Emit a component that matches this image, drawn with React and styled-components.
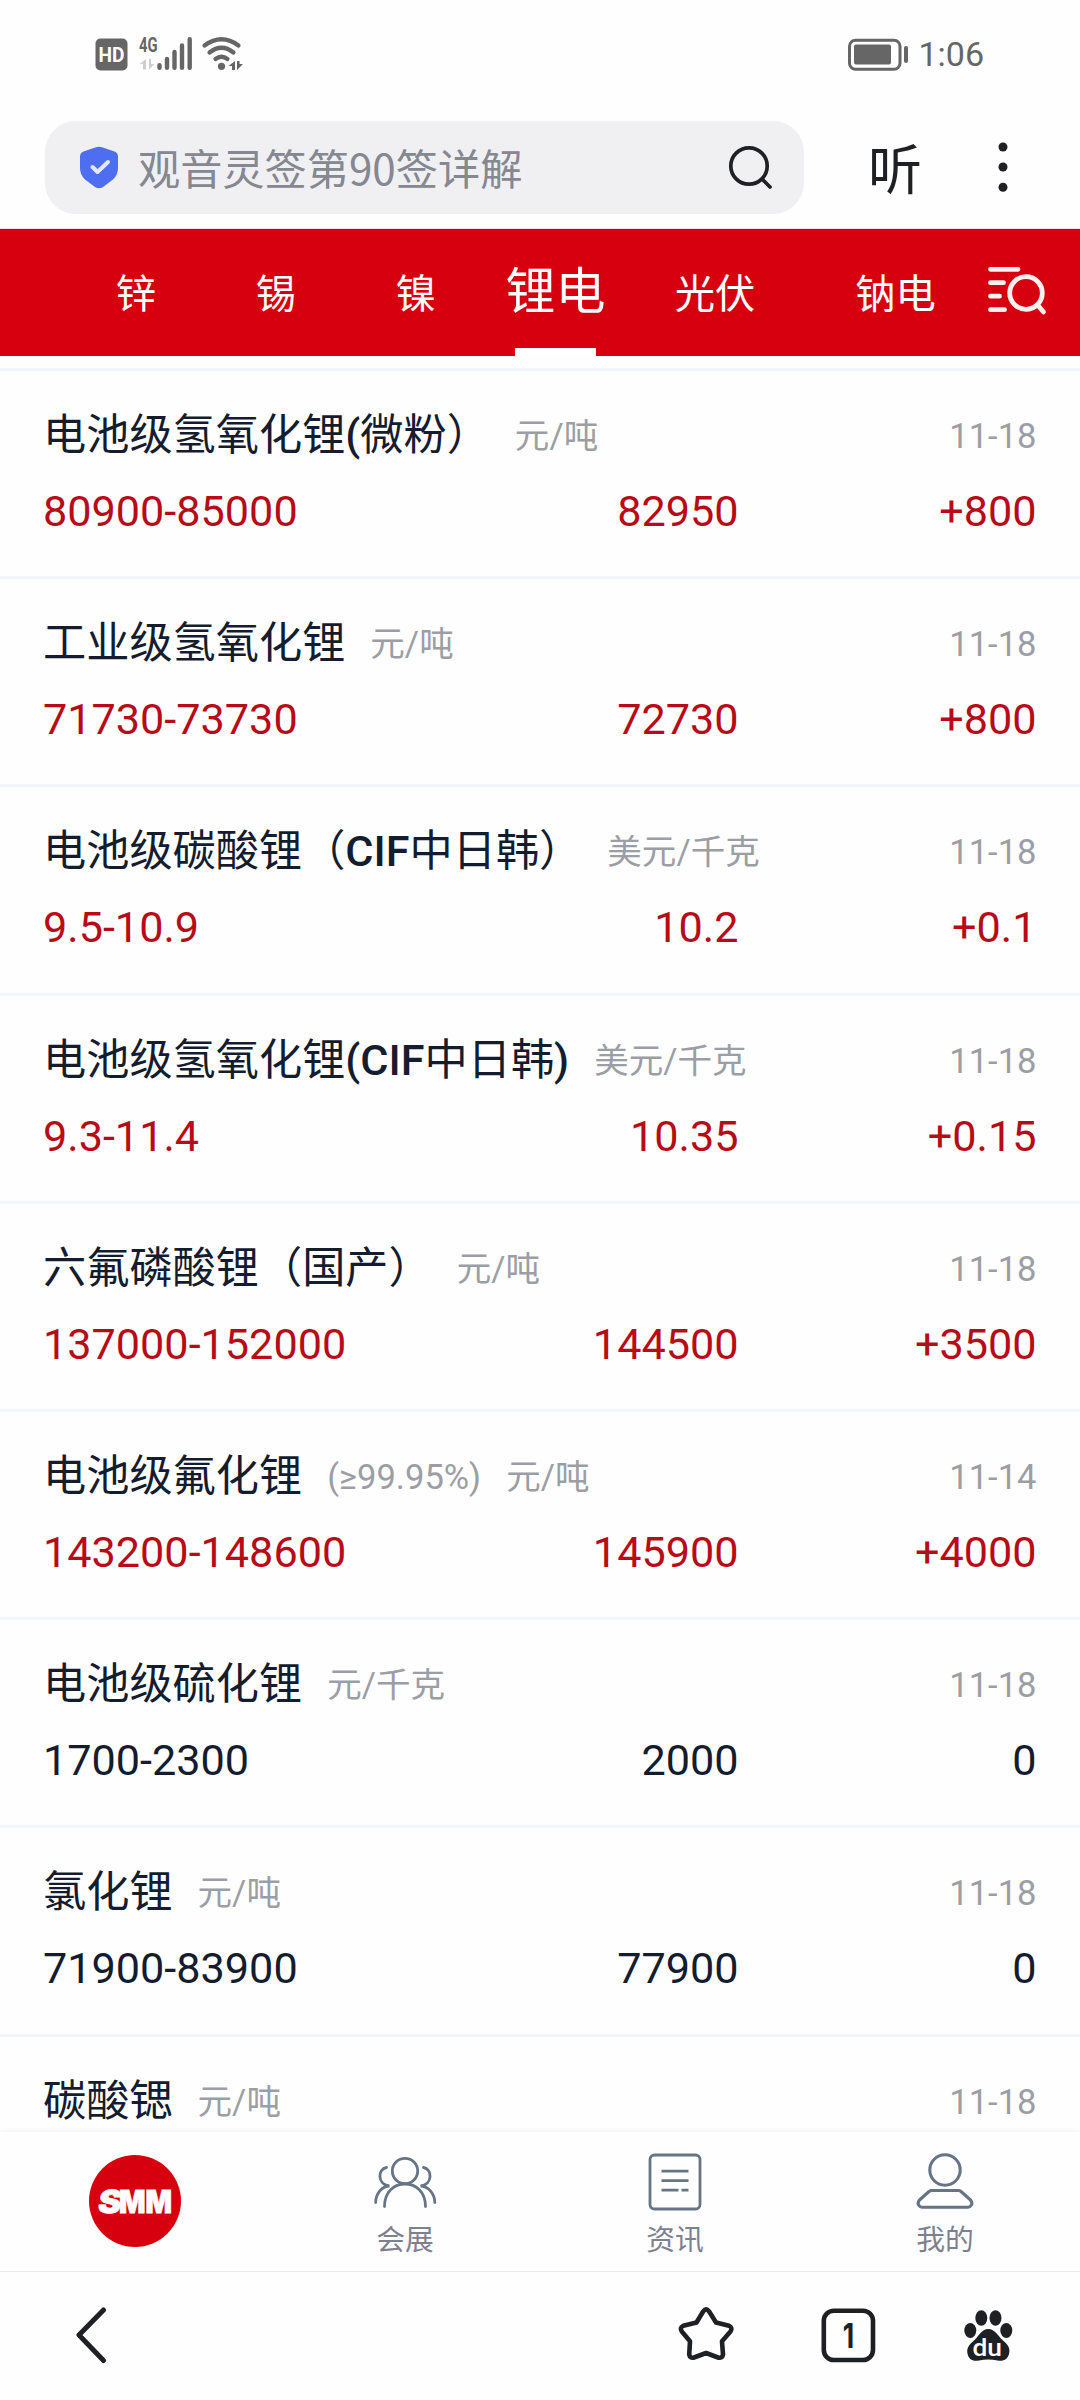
import React from 'react';
import styled, { createGlobalStyle } from 'styled-components';

const GlobalStyle = createGlobalStyle`
  * {
    box-sizing: border-box;
  }

  body {
    margin: 0;
    background-color: #fefefe;
    font-family: Roboto, 'Noto Sans CJK SC', sans-serif;
  }
`;

const Screen = styled.div`
  display: flex;
  flex-direction: column;
  width: 1080px;
  height: 2400px;
  overflow: hidden;
  background-color: #fefefe;
`;

const StatusBar = styled.div`
  display: flex;
  flex: none;
  align-items: flex-end;
  justify-content: space-between;
  height: 72px;
  padding: 0 96px 0 95px;
`;

const StatusGroup = styled.div`
  display: flex;
  align-items: center;
  gap: 9px;
`;

const Clock = styled.span`
  font-size: 34px;
  line-height: 36px;
  color: #666;
`;

const BrowserBar = styled.div`
  display: flex;
  flex: none;
  align-items: center;
  height: 157px;
  padding: 34px 72px 0 45px;
  border-bottom: 1px solid #f5dfe2;
`;

const SearchBox = styled.div`
  display: flex;
  align-items: center;
  width: 759px;
  height: 93px;
  padding: 0 31px 0 33px;
  border-radius: 31px;
  background-color: #f0f0f3;
`;

const SearchText = styled.span`
  flex: 1;
  margin-left: 18px;
  font-family: 'Noto Sans CJK SC', sans-serif;
  font-size: 42.2px;
  line-height: 60px;
  color: #858791;
`;

const ListenButton = styled.span`
  margin: 0 auto 0 64px;
  font-family: 'Noto Sans CJK SC', sans-serif;
  font-size: 54px;
  font-weight: 400;
  line-height: 60px;
  color: #1f2024;
`;

const Tabs = styled.nav`
  display: flex;
  flex: none;
  height: 127px;
  padding-left: 66px;
  border-top: 1px solid #a0101d;
  background-color: #d7000f;
`;

const Tab = styled.div`
  position: relative;
  flex: none;
  width: ${(props) => props.$width}px;
  padding-top: ${(props) => (props.$active ? 27 : 35)}px;
  font-size: ${(props) => (props.$active ? 50 : 40.3)}px;
  line-height: ${(props) => (props.$active ? 70 : 60)}px;
  text-align: center;
  color: #fff;
`;

const Indicator = styled.div`
  position: absolute;
  bottom: 0;
  left: 50%;
  width: 81px;
  height: 8px;
  margin-left: -41px;
  background-color: #fff;
`;

const TabSearch = styled.div`
  padding-top: 34px;
`;

const List = styled.main`
  flex: 1;
  min-height: 0;
  padding-top: 12px;
  overflow: hidden;
`;

const Row = styled.section`
  height: 208.2px;
  padding: 34px 43.5px 0 43px;
  border-top: 3px solid #f2f5f9;
`;

const RowHead = styled.div`
  display: flex;
  align-items: center;
  height: 62px;
`;

const Name = styled.h2`
  margin: 0;
  font-size: 43.2px;
  font-weight: 400;
  line-height: 62px;
  white-space: nowrap;
  color: #141c2f;
`;

const Latin = styled.span`
  font-weight: 500;
`;

const Unit = styled.span`
  margin-left: 25px;
  font-size: 34.56px;
  line-height: 50px;
  white-space: nowrap;
  color: #9c9ea5;
`;

const RowDate = styled.span`
  margin-left: auto;
  font-size: 34.56px;
  line-height: 50px;
  color: #9c9ea5;
`;

const Prices = styled.div`
  display: grid;
  grid-template-columns: 400px 295.5px 1fr;
  margin-top: 15px;
  font-size: 43.2px;
  line-height: 60px;
  color: ${(props) => (props.$up ? '#b70c18' : '#141c2f')};
`;

const Price = styled.span`
  text-align: ${(props) => props.$align || 'right'};
`;

const BottomNav = styled.nav`
  display: grid;
  flex: none;
  grid-template-columns: repeat(4, 1fr);
  height: 139px;
  background-color: #fefefe;
  box-shadow: 0 -2px 5px rgba(0, 0, 0, 0.035);
`;

const NavItem = styled.div`
  display: flex;
  flex-direction: column;
  align-items: center;
  padding-top: ${(props) => props.$top || 20}px;
`;

const NavLabel = styled.span`
  margin-top: 8px;
  font-size: 28.8px;
  line-height: 40px;
  color: #7e818d;
`;

const Toolbar = styled.footer`
  display: flex;
  flex: none;
  align-items: center;
  height: 129px;
  padding: 0 65px 2px 72px;
  border-top: 1px solid #e9e9eb;
`;

const ToolbarActions = styled.div`
  display: flex;
  align-items: center;
  gap: 84px;
  margin-left: auto;
`;

const tabs = [
  { label: '锌', width: 140 },
  { label: '锡', width: 140 },
  { label: '镍', width: 140 },
  { label: '锂电', width: 139, active: true },
  { label: '光伏', width: 180 },
  { label: '钠电', width: 181 },
];

const prices = [
  { name: '电池级氢氧化锂(微粉）', units: ['元/吨'], date: '11-18', range: '80900-85000', avg: '82950', change: '+800' },
  { name: '工业级氢氧化锂', units: ['元/吨'], date: '11-18', range: '71730-73730', avg: '72730', change: '+800' },
  { name: '电池级碳酸锂（CIF中日韩）', units: ['美元/千克'], date: '11-18', range: '9.5-10.9', avg: '10.2', change: '+0.1' },
  { name: '电池级氢氧化锂(CIF中日韩)', units: ['美元/千克'], date: '11-18', range: '9.3-11.4', avg: '10.35', change: '+0.15' },
  { name: '六氟磷酸锂（国产）', units: ['元/吨'], date: '11-18', range: '137000-152000', avg: '144500', change: '+3500' },
  { name: '电池级氟化锂', units: ['(≥99.95%)', '元/吨'], date: '11-14', range: '143200-148600', avg: '145900', change: '+4000' },
  { name: '电池级硫化锂', units: ['元/千克'], date: '11-18', range: '1700-2300', avg: '2000', change: '0' },
  { name: '氯化锂', units: ['元/吨'], date: '11-18', range: '71900-83900', avg: '77900', change: '0' },
  { name: '碳酸锶', units: ['元/吨'], date: '11-18', range: '', avg: '', change: '0' },
];

const SignalIcons = () => (
  <svg width="150" height="46" viewBox="95 26 150 46">
    <rect x="95.5" y="38.5" width="32" height="32" rx="5" fill="#666" />
    <text x="111.5" y="62" textAnchor="middle" textLength="26" lengthAdjust="spacingAndGlyphs" fontFamily="Roboto" fontWeight="700" fontSize="21" fill="#fff">HD</text>
    <text x="139" y="52" textLength="18.5" lengthAdjust="spacingAndGlyphs" fontFamily="Roboto" fontWeight="700" fontSize="20.5" fill="#666">4G</text>
    <path d="M146 59V69.5H143V64H139.5ZM149 59V69.5L154.5 64H151V59Z" fill="#cfcfcf" />
    <path d="M159.5 65.3V67.8M167 59V67.8M174.5 52V67.8M182 45.5V67.8M189.7 39.3V67.8" stroke="#666" strokeWidth="4.4" strokeLinecap="round" />
    <path d="M204.5 45.5Q221.5 33 238.5 45.5M209.5 52.5Q221.5 43 233.5 52.5M215.5 59Q221.5 54.5 227.5 59" fill="none" stroke="#666" strokeWidth="4.2" strokeLinecap="round" />
    <circle cx="221.5" cy="66.3" r="3.6" fill="#666" />
    <path d="M235 61V70H232V66H228.5ZM237 61V70L243 64H239.5V61Z" fill="#666" />
  </svg>
);

const BatteryIcon = () => (
  <svg width="61" height="36" viewBox="848 36 61 36">
    <rect x="849.5" y="40.2" width="50.5" height="29" rx="6" fill="none" stroke="#666" strokeWidth="3" />
    <rect x="854" y="44.5" width="37" height="20" rx="2" fill="#666" />
    <rect x="904" y="46" width="4" height="17" rx="2" fill="#666" />
  </svg>
);

const ShieldIcon = () => (
  <svg width="42" height="44" viewBox="78 146 42 44">
    <path d="M96 148.3Q99 147 102 148.3L114.5 152.6Q118 154 118 157.5V169Q118 176 113 180.5L103 188Q99 190.5 95 188L85 180.5Q80 176 80 169V157.5Q80 154 83.5 152.6Z" fill="#4e6ef2" />
    <path d="M92.5 168L97.5 173L108 163" fill="none" stroke="#e4e9fc" strokeWidth="4" strokeLinecap="round" strokeLinejoin="round" />
  </svg>
);

const SearchIcon = () => (
  <svg width="45" height="45" viewBox="728 145 45 45">
    <g fill="none" stroke="#1f2024" strokeWidth="3.7" strokeLinecap="round">
      <circle cx="749" cy="166" r="18.2" />
      <path d="M762.5 179.500L770 187" />
    </g>
  </svg>
);

const MoreIcon = () => (
  <svg width="10" height="50" viewBox="998 142 10 50" fill="#1f2024">
    <circle cx="1003" cy="147" r="4.5" />
    <circle cx="1003" cy="167" r="4.5" />
    <circle cx="1003" cy="187.3" r="4.5" />
  </svg>
);

const ListSearchIcon = () => (
  <svg width="62" height="52" viewBox="986 264 62 52">
    <g fill="none" stroke="#fff0f0" strokeWidth="4.8" strokeLinecap="round">
      <path d="M990.5 269.3H1018M990.5 282.7H1003.5M990.5 296.2H999.5M990.5 309.7H1004.5" />
      <circle cx="1026" cy="293" r="16.3" />
      <path d="M1038 305.5L1043.5 312" />
    </g>
  </svg>
);

const SmmLogo = () => (
  <svg width="92" height="92" viewBox="0 0 92 92">
    <circle cx="46" cy="46" r="46" fill="#d7000f" />
    <g fontFamily="Inter, sans-serif" fontWeight="900" fontSize="32" fill="#fff">
      <text x="0" y="0" textLength="23" lengthAdjust="spacingAndGlyphs" transform="translate(8 58) skewX(-8)" stroke="#fff" strokeWidth="0.8">S</text>
      <text x="30" y="58" textLength="53" lengthAdjust="spacingAndGlyphs" stroke="#fff" strokeWidth="0.8">MM</text>
    </g>
  </svg>
);

const ExpoIcon = () => (
  <svg width="64" height="60" viewBox="373 2152 64 60">
    <g fill="none" stroke="#667485" strokeWidth="2.8" strokeLinecap="round">
      <circle cx="405" cy="2171" r="12.7" />
      <path d="M384.5 2206.5C384.5 2192 394 2184 405 2184S425.5 2192 425.5 2206.5" />
      <path d="M386.5 2167.5C377.5 2169 377 2184.5 389.5 2186C381.5 2186 375.7 2194 375.7 2202.5" />
      <path d="M423.5 2167.5C432.5 2169 433 2184.5 420.5 2186C428.5 2186 434.8 2194 434.8 2202.5" />
    </g>
  </svg>
);

const NewsIcon = () => (
  <svg width="60" height="60" viewBox="645 2152 60 60">
    <g fill="none" stroke="#667485" strokeWidth="2.8">
      <rect x="650" y="2155" width="50" height="54" rx="4.5" />
      <path d="M661.5 2171.2H688.5M661.5 2180.6H688.5M661.5 2190.1H678.5M681.5 2190.1H688.5" />
    </g>
  </svg>
);

const ProfileIcon = () => (
  <svg width="60" height="60" viewBox="915 2152 60 60">
    <g fill="none" stroke="#667485" strokeWidth="3.1" strokeLinejoin="round">
      <circle cx="945" cy="2170" r="15.2" />
      <path d="M931.5 2190.5H958.5Q960 2190.5 961 2191.5L970.5 2200Q973 2203 971 2205.5Q970 2207.2 968 2207.2H922Q920 2207.2 919 2205.5Q917 2203 919.5 2200L929 2191.5Q930 2190.5 931.5 2190.5Z" />
    </g>
  </svg>
);

const BackIcon = () => (
  <svg width="38" height="58" viewBox="72 2306 38 58">
    <path d="M103.5 2310L79 2335L103.5 2360.5" fill="none" stroke="#1f2024" strokeWidth="5" strokeLinecap="round" strokeLinejoin="round" />
  </svg>
);

const StarIcon = () => (
  <svg width="58" height="58" viewBox="677.5 2306 58 58">
    <path d="M703.8 2311.3Q706.6 2307.5 709.5 2311.3L716.5 2322.5L729.5 2325.8Q733.5 2327.8 731 2331.5L722.5 2341.3L723.5 2354.5Q722.8 2358.5 718.5 2357.5L706.6 2353L694.5 2357.5Q690.5 2358.5 689.7 2354.5L690.5 2341.3L682.3 2331.5Q679.8 2327.8 683.8 2325.8L697 2322.5Z" fill="none" stroke="#1f2024" strokeWidth="4.6" strokeLinejoin="round" />
  </svg>
);

const WindowsIcon = () => (
  <svg width="58" height="58" viewBox="818.5 2306.5 58 58">
    <rect x="823.3" y="2311.2" width="49.2" height="49.3" rx="10" fill="none" stroke="#1f2024" strokeWidth="4.6" />
    <text x="0" y="0" transform="translate(848 2348.5) scale(0.78 1)" textAnchor="middle" fontFamily="Inter, sans-serif" fontWeight="700" fontSize="34" fill="#1f2024">1</text>
  </svg>
);

const PawIcon = () => (
  <svg width="54" height="58" viewBox="961 2306 54 58">
    <g fill="#1f2024">
      <ellipse cx="981.3" cy="2318" rx="6" ry="7.8" />
      <ellipse cx="995.5" cy="2318" rx="6" ry="7.8" />
      <ellipse cx="970.3" cy="2330.5" rx="6" ry="7.4" />
      <ellipse cx="1006.3" cy="2330.5" rx="6" ry="7.4" />
      <path d="M988.3 2329C995 2329 998 2336 1002.5 2340C1008 2344.5 1010 2348 1009.3 2352.5C1008 2360 1003 2361.5 997.5 2360.5Q988 2358.5 979 2360.5C973 2361.5 968.5 2360 967.3 2352.5C966.8 2348 969 2344.5 974.5 2340C979 2336 981.5 2329 988.3 2329Z" />
    </g>
    <text x="972.5" y="2356" textLength="29.5" lengthAdjust="spacingAndGlyphs" fontFamily="Roboto" fontWeight="500" fontSize="24.5" fill="#fff">du</text>
  </svg>
);

const PriceName = ({ name }) => (
  <Name>
    {name.split(/([A-Z()]+)/).map((part, i) => (i % 2 ? <Latin key={i}>{part}</Latin> : part))}
  </Name>
);

const PriceRow = ({ item }) => (
  <Row>
    <RowHead>
      <PriceName name={item.name} />
      {item.units.map((unit) => (
        <Unit key={unit}>{unit}</Unit>
      ))}
      <RowDate>{item.date}</RowDate>
    </RowHead>
    {item.range && (
      <Prices $up={item.change.startsWith('+')}>
        <Price $align="left">{item.range}</Price>
        <Price>{item.avg}</Price>
        <Price>{item.change}</Price>
      </Prices>
    )}
  </Row>
);

const App = () => {
  return (
    <Screen>
      <GlobalStyle />
      <StatusBar>
        <SignalIcons />
        <StatusGroup>
          <BatteryIcon />
          <Clock>1:06</Clock>
        </StatusGroup>
      </StatusBar>

      <BrowserBar>
        <SearchBox>
          <ShieldIcon />
          <SearchText>观音灵签第90签详解</SearchText>
          <SearchIcon />
        </SearchBox>
        <ListenButton>听</ListenButton>
        <MoreIcon />
      </BrowserBar>

      <Tabs>
        {tabs.map((tab) => (
          <Tab key={tab.label} $width={tab.width} $active={tab.active}>
            {tab.label}
            {tab.active && <Indicator />}
          </Tab>
        ))}
        <TabSearch>
          <ListSearchIcon />
        </TabSearch>
      </Tabs>

      <List>
        {prices.map((item) => (
          <PriceRow key={item.name} item={item} />
        ))}
      </List>

      <BottomNav>
        <NavItem $top={23}>
          <SmmLogo />
        </NavItem>
        <NavItem>
          <ExpoIcon />
          <NavLabel>会展</NavLabel>
        </NavItem>
        <NavItem>
          <NewsIcon />
          <NavLabel>资讯</NavLabel>
        </NavItem>
        <NavItem>
          <ProfileIcon />
          <NavLabel>我的</NavLabel>
        </NavItem>
      </BottomNav>

      <Toolbar>
        <BackIcon />
        <ToolbarActions>
          <StarIcon />
          <WindowsIcon />
          <PawIcon />
        </ToolbarActions>
      </Toolbar>
    </Screen>
  );
};

export default App;
